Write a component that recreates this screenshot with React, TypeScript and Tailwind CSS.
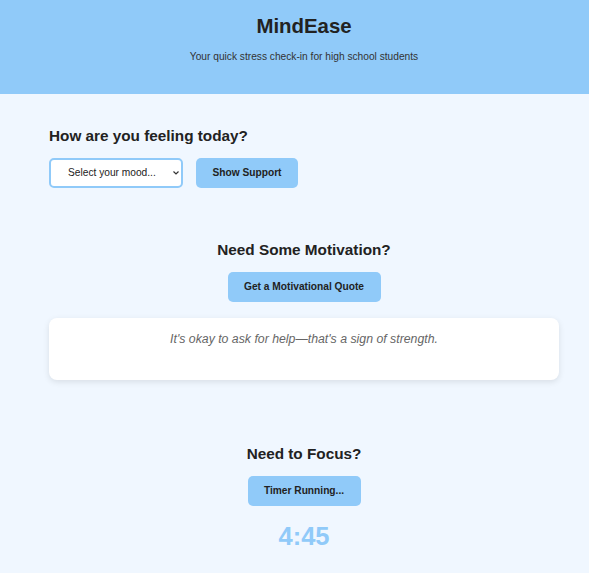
import { useState } from "react"

export default function App() {
  const [mood, setMood] = useState("")

  return (
    <div className="min-h-screen overflow-x-hidden bg-[#f0f7ff]">
      <div className="w-[608px] text-[#222] font-['Liberation_Sans',Arial,sans-serif]">
        {/* Header */}
        <header className="h-[94px] bg-[#90caf9] text-center pt-[14px]">
          <h1 className="text-[20.4px] leading-[24px] font-bold">MindEase</h1>
          <p className="mt-[12px] text-[10.2px] leading-[14px] text-[#333]">
            Your quick stress check-in for high school students
          </p>
        </header>

        <main className="px-[49px]">
          {/* Mood check */}
          <section className="pt-[33px]">
            <h2 className="text-[15.3px] leading-[18px] font-bold">How are you feeling today?</h2>
            <div className="mt-[13px] flex gap-[13px]">
              <div className="relative">
                <select
                  value={mood}
                  onChange={(e) => setMood(e.target.value)}
                  className="appearance-none w-[134px] h-[30px] pl-[17px] pr-[16px] text-[10.2px] bg-white border-2 border-[#90caf9] rounded-[5px] outline-none"
                >
                  <option value="">Select your mood...</option>
                  <option value="happy">Happy</option>
                  <option value="stressed">Stressed</option>
                  <option value="tired">Tired</option>
                </select>
                <svg
                  className="absolute left-[124px] top-[13px] pointer-events-none"
                  width="6"
                  height="4"
                  viewBox="0 0 6 4"
                  fill="none"
                >
                  <path d="M0.5 0.5 L3 3 L5.5 0.5" stroke="#333" strokeWidth="1.2" />
                </svg>
              </div>
              <button className="w-[102px] h-[30px] bg-[#90caf9] rounded-[5px] text-[10.2px] font-bold">
                Show Support
              </button>
            </div>
          </section>

          {/* Motivation */}
          <section className="pt-[53px] flex flex-col items-center">
            <h2 className="text-[15.3px] leading-[18px] font-bold">Need Some Motivation?</h2>
            <button className="mt-[13px] w-[153px] h-[30px] bg-[#90caf9] rounded-[5px] text-[10.2px] font-bold">
              Get a Motivational Quote
            </button>
            <div className="mt-[16px] w-full h-[62px] bg-white rounded-[8px] shadow-[0_2px_6px_rgba(0,0,0,0.1)] pt-[13px] text-center">
              <p className="text-[12.3px] leading-[16px] italic text-[#666]">
                It's okay to ask for help—that's a sign of strength.
              </p>
            </div>
          </section>

          {/* Focus timer */}
          <section className="pt-[65px] flex flex-col items-center">
            <h2 className="text-[15.3px] leading-[18px] font-bold">Need to Focus?</h2>
            <button className="mt-[13px] w-[113px] h-[30px] bg-[#90caf9] rounded-[5px] text-[10.2px] font-bold">
              Timer Running...
            </button>
            <div className="mt-[15px] text-[25.5px] leading-[30px] font-bold text-[#90caf9]">4:45</div>
          </section>
        </main>
      </div>
    </div>
  )
}
